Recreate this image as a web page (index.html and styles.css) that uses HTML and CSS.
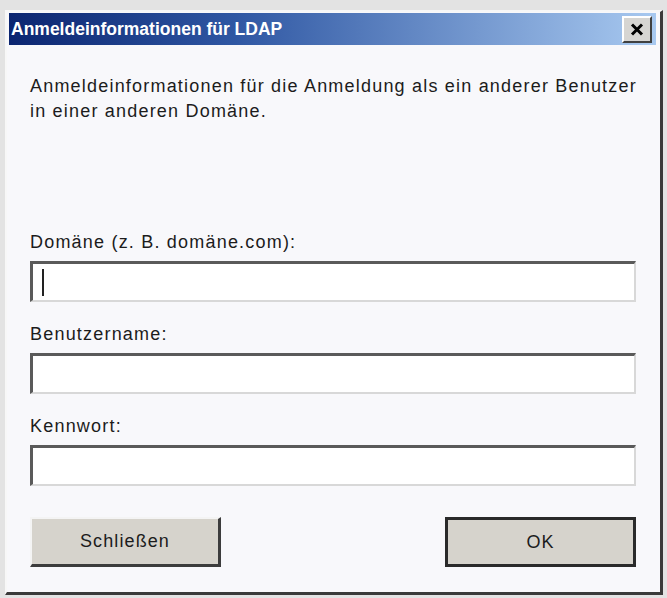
FILE: index.html
```html
<!doctype html>
<html lang="de">
  <head>
    <meta charset="UTF-8" />
    <title>Anmeldeinformationen für LDAP</title>
    <link rel="stylesheet" href="styles.css">
  </head>
  <body>
    <div class="window">
      <div class="titlebar">
        <span class="title">Anmeldeinformationen für LDAP</span>
        <button class="close" type="button" aria-label="Schließen">
          <svg width="14" height="13" viewBox="0 0 14 13">
            <path d="M2 1.5 L12 11.5 M12 1.5 L2 11.5" stroke="#000" stroke-width="3" fill="none" />
          </svg>
        </button>
      </div>

      <div class="content">
        <p class="intro">Anmeldeinformationen für die Anmeldung als ein anderer Benutzer<br>in einer anderen Domäne.</p>

        <div class="fields">
          <label class="field">
            <span class="label">Domäne (z. B. domäne.com):</span>
            <span class="input"><span class="caret"></span></span>
          </label>
          <label class="field">
            <span class="label">Benutzername:</span>
            <span class="input"></span>
          </label>
          <label class="field">
            <span class="label">Kennwort:</span>
            <span class="input"></span>
          </label>
        </div>

        <div class="buttons">
          <button class="btn" type="button">Schließen</button>
          <button class="btn default" type="button">OK</button>
        </div>
      </div>
    </div>
  </body>
</html>
```

FILE: styles.css
```css
body {
  margin: 0;
  padding: 0;
  background-color: #e3e3e3;
  font-family: "Liberation Sans", Arial, sans-serif;
  color: #1c1c1c;
}

.window {
  box-sizing: border-box;
  margin: 10px 0 0 5px;
  width: 658px;
  height: 585px;
  padding: 1px 4px 0 2px;
  border-top: 2px solid #f7f7f7;
  border-left: 2px solid #f7f7f7;
  border-right: 3px solid #3a3a3a;
  border-bottom: 3px solid #3a3a3a;
  background-color: #f8f8fb;
  display: flex;
  flex-direction: column;
}

.titlebar {
  height: 32px;
  display: flex;
  align-items: center;
  justify-content: space-between;
  padding: 0 4px 0 2px;
  background: linear-gradient(to right, #0b2570 0%, #2f57a3 35%, #a8c9f0 100%);
}

.title {
  color: #fff;
  font-weight: bold;
  font-size: 17.5px;
}

.close {
  box-sizing: border-box;
  width: 30px;
  height: 27px;
  padding: 0;
  display: flex;
  align-items: center;
  justify-content: center;
  background-color: #d6d5d2;
  border-top: 2px solid #fff;
  border-left: 2px solid #fff;
  border-right: 2px solid #404040;
  border-bottom: 2px solid #404040;
}

.content {
  flex-grow: 1;
  display: flex;
  flex-direction: column;
  padding: 29px 20px 0 21px;
  font-size: 18px;
  line-height: 25px;
  letter-spacing: 1.2px;
}

.intro {
  margin: 0;
  white-space: nowrap;
}

.fields {
  margin-top: 106px;
  display: flex;
  flex-direction: column;
  gap: 20px;
}

.field {
  display: flex;
  flex-direction: column;
  gap: 6px;
}

.input {
  box-sizing: border-box;
  height: 41px;
  display: flex;
  align-items: center;
  padding-left: 9px;
  background-color: #fff;
  border-top: 3px solid #5a5a5a;
  border-left: 3px solid #5a5a5a;
  border-right: 2px solid #d8d8d8;
  border-bottom: 2px solid #d8d8d8;
}

.caret {
  width: 2px;
  height: 27px;
  background-color: #222;
}

.buttons {
  margin-top: 31px;
  display: flex;
  justify-content: space-between;
}

.btn {
  box-sizing: border-box;
  width: 191px;
  height: 50px;
  font-family: inherit;
  font-size: 18px;
  letter-spacing: 1.1px;
  color: #1c1c1c;
  background-color: #d6d3cc;
  border-top: 2px solid #f4f4f4;
  border-left: 2px solid #f4f4f4;
  border-right: 3px solid #3c3c3c;
  border-bottom: 3px solid #3c3c3c;
}

.btn.default {
  border: 3px solid #2a2a2a;
}
```
